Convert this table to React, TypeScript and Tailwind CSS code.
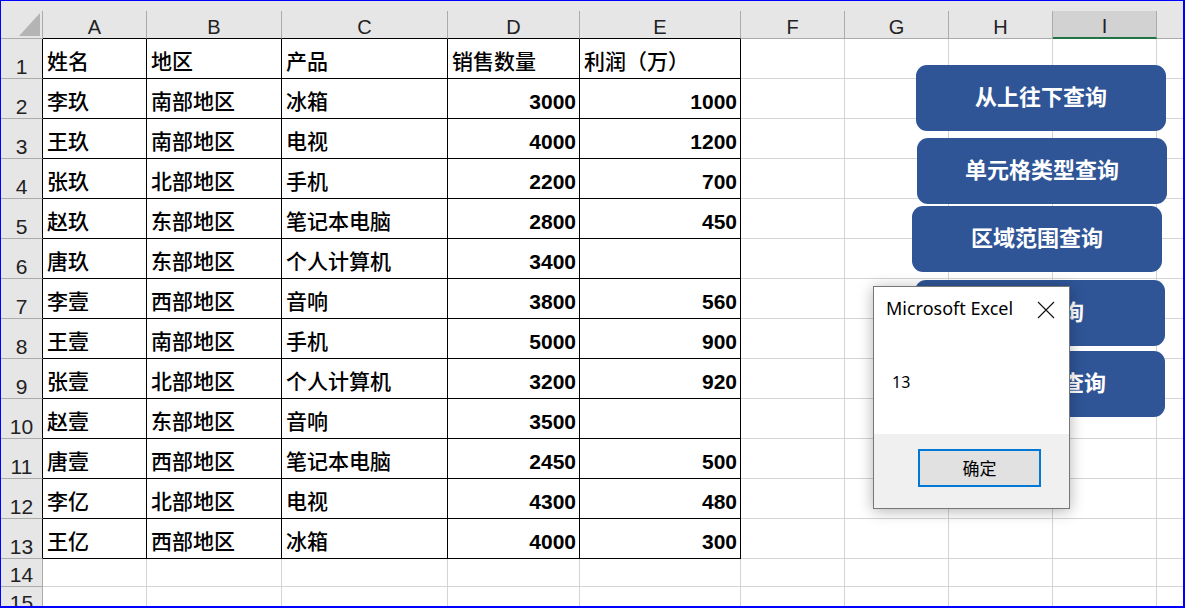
const cols = [
  { key: 'A', w: 'w-[104px]' },
  { key: 'B', w: 'w-[135px]' },
  { key: 'C', w: 'w-[166px]' },
  { key: 'D', w: 'w-[132px]' },
  { key: 'E', w: 'w-[161px]' },
  { key: 'F', w: 'w-[104px]' },
  { key: 'G', w: 'w-[104px]' },
  { key: 'H', w: 'w-[104px]' },
  { key: 'I', w: 'w-[104px]' },
]

const rows: (string | number)[][] = [
  ['姓名', '地区', '产品', '销售数量', '利润（万）'],
  ['李玖', '南部地区', '冰箱', 3000, 1000],
  ['王玖', '南部地区', '电视', 4000, 1200],
  ['张玖', '北部地区', '手机', 2200, 700],
  ['赵玖', '东部地区', '笔记本电脑', 2800, 450],
  ['唐玖', '东部地区', '个人计算机', 3400, ''],
  ['李壹', '西部地区', '音响', 3800, 560],
  ['王壹', '南部地区', '手机', 5000, 900],
  ['张壹', '北部地区', '个人计算机', 3200, 920],
  ['赵壹', '东部地区', '音响', 3500, ''],
  ['唐壹', '西部地区', '笔记本电脑', 2450, 500],
  ['李亿', '北部地区', '电视', 4300, 480],
  ['王亿', '西部地区', '冰箱', 4000, 300],
]

const buttons = [
  { label: '从上往下查询', cls: 'left-[915px] top-[64px]' },
  { label: '单元格类型查询', cls: 'left-[916px] top-[137px]' },
  { label: '区域范围查询', cls: 'left-[911px] top-[205px]' },
  { label: '整列查询', cls: 'left-[914px] top-[279px]' },
  { label: '指定条件查询', cls: 'left-[914px] top-[350px]' },
]

function EmptyRow({ n }: { n: number }) {
  return (
    <div className="flex h-[28px] shrink-0">
      <div className="w-[42px] shrink-0 flex items-end justify-center pb-[1px] bg-[#e6e6e6] border-r border-b border-[#ababab] text-[21px] leading-none text-[#222]">
        {n}
      </div>
      {cols.map((c) => (
        <div key={c.key} className={`${c.w} shrink-0 border-r border-b border-[#d4d4d4]`} />
      ))}
      <div className="flex-1 border-b border-[#d4d4d4]" />
    </div>
  )
}

export default function App() {
  return (
    <div className="relative w-[1185px] h-[608px] overflow-hidden bg-white border-t border-l border-r-2 border-b-2 border-[#0000ff] font-['Liberation_Sans','Noto_Sans_CJK_SC',sans-serif] flex flex-col">
      <div className="h-[10px] shrink-0 bg-[#e6e6e6]" />

      {/* column headers */}
      <div className="flex h-[28px] shrink-0 bg-[#e6e6e6] text-[20px] leading-none text-[#222]">
        <div className="w-[42px] shrink-0 flex items-end justify-end pr-[2px] pb-[2px] border-r border-b border-[#ababab]">
          <svg width="21" height="23" viewBox="0 0 21 23">
            <polygon points="21,0 21,23 0,23" fill="#b4b4b4" />
          </svg>
        </div>
        {cols.map((c, i) => (
          <div
            key={c.key}
            className={`${c.w} shrink-0 flex items-end justify-center pb-[1px] border-r border-[#ababab] ${
              c.key === 'I'
                ? 'bg-[#d2d2d2] border-b-2 border-b-[#217346]'
                : i < 5
                  ? 'border-b border-b-black'
                  : 'border-b border-b-[#ababab]'
            }`}
          >
            {c.key}
          </div>
        ))}
        <div className="flex-1 border-b border-[#ababab]" />
      </div>

      {/* data rows */}
      {rows.map((r, ri) => (
        <div key={ri} className="flex h-[40px] shrink-0">
          <div className="w-[42px] shrink-0 flex items-end justify-center pb-[1px] bg-[#e6e6e6] border-b border-[#ababab] border-r border-r-black text-[21px] leading-none text-[#222]">
            {ri + 1}
          </div>
          {cols.map((c, ci) =>
            ci < 5 ? (
              <div
                key={c.key}
                className={`${c.w} shrink-0 flex items-end pb-[6px] pl-[4px] pr-[3px] border-r border-b border-black text-[21px] leading-none text-black ${
                  typeof r[ci] === 'number' ? 'justify-end font-bold' : 'justify-start font-medium'
                }`}
              >
                {r[ci]}
              </div>
            ) : (
              <div key={c.key} className={`${c.w} shrink-0 border-r border-b border-[#d4d4d4]`} />
            )
          )}
          <div className="flex-1 border-b border-[#d4d4d4]" />
        </div>
      ))}

      <EmptyRow n={14} />
      <EmptyRow n={15} />

      {/* shape buttons */}
      {buttons.map((b) => (
        <div
          key={b.label}
          className={`absolute ${b.cls} w-[250px] h-[66px] rounded-[11px] bg-[#2f5597] flex items-center justify-center text-white font-bold text-[22px] leading-none`}
        >
          {b.label}
        </div>
      ))}

      {/* message box */}
      <div className="absolute left-[872px] top-[285px] w-[197px] h-[223px] bg-[#f0f0f0] border border-[#777777] shadow-[0_2px_14px_rgba(0,0,0,0.3)] flex flex-col font-['Noto_Sans','Noto_Sans_CJK_SC',sans-serif] text-black">
        <div className="h-[147px] bg-white flex flex-col">
          <div className="flex items-start justify-between pl-[12px] pr-[14px] pt-[9px]">
            <span className="text-[18px] leading-[24px]">Microsoft Excel</span>
            <svg width="18" height="18" viewBox="0 0 18 18" className="mt-[5px]">
              <path d="M1 1 L17 17 M17 1 L1 17" stroke="#111" strokeWidth="1.1" fill="none" />
            </svg>
          </div>
          <div className="pl-[18px] pt-[54px] text-[16px] leading-none">13</div>
        </div>
        <div className="flex-1 flex justify-start pl-[44px] pt-[15px]">
          <div className="w-[123px] h-[38px] border-2 border-[#0078d7] bg-[#e1e1e1] flex items-center justify-center text-[17px] leading-none">
            确定
          </div>
        </div>
      </div>
    </div>
  )
}
